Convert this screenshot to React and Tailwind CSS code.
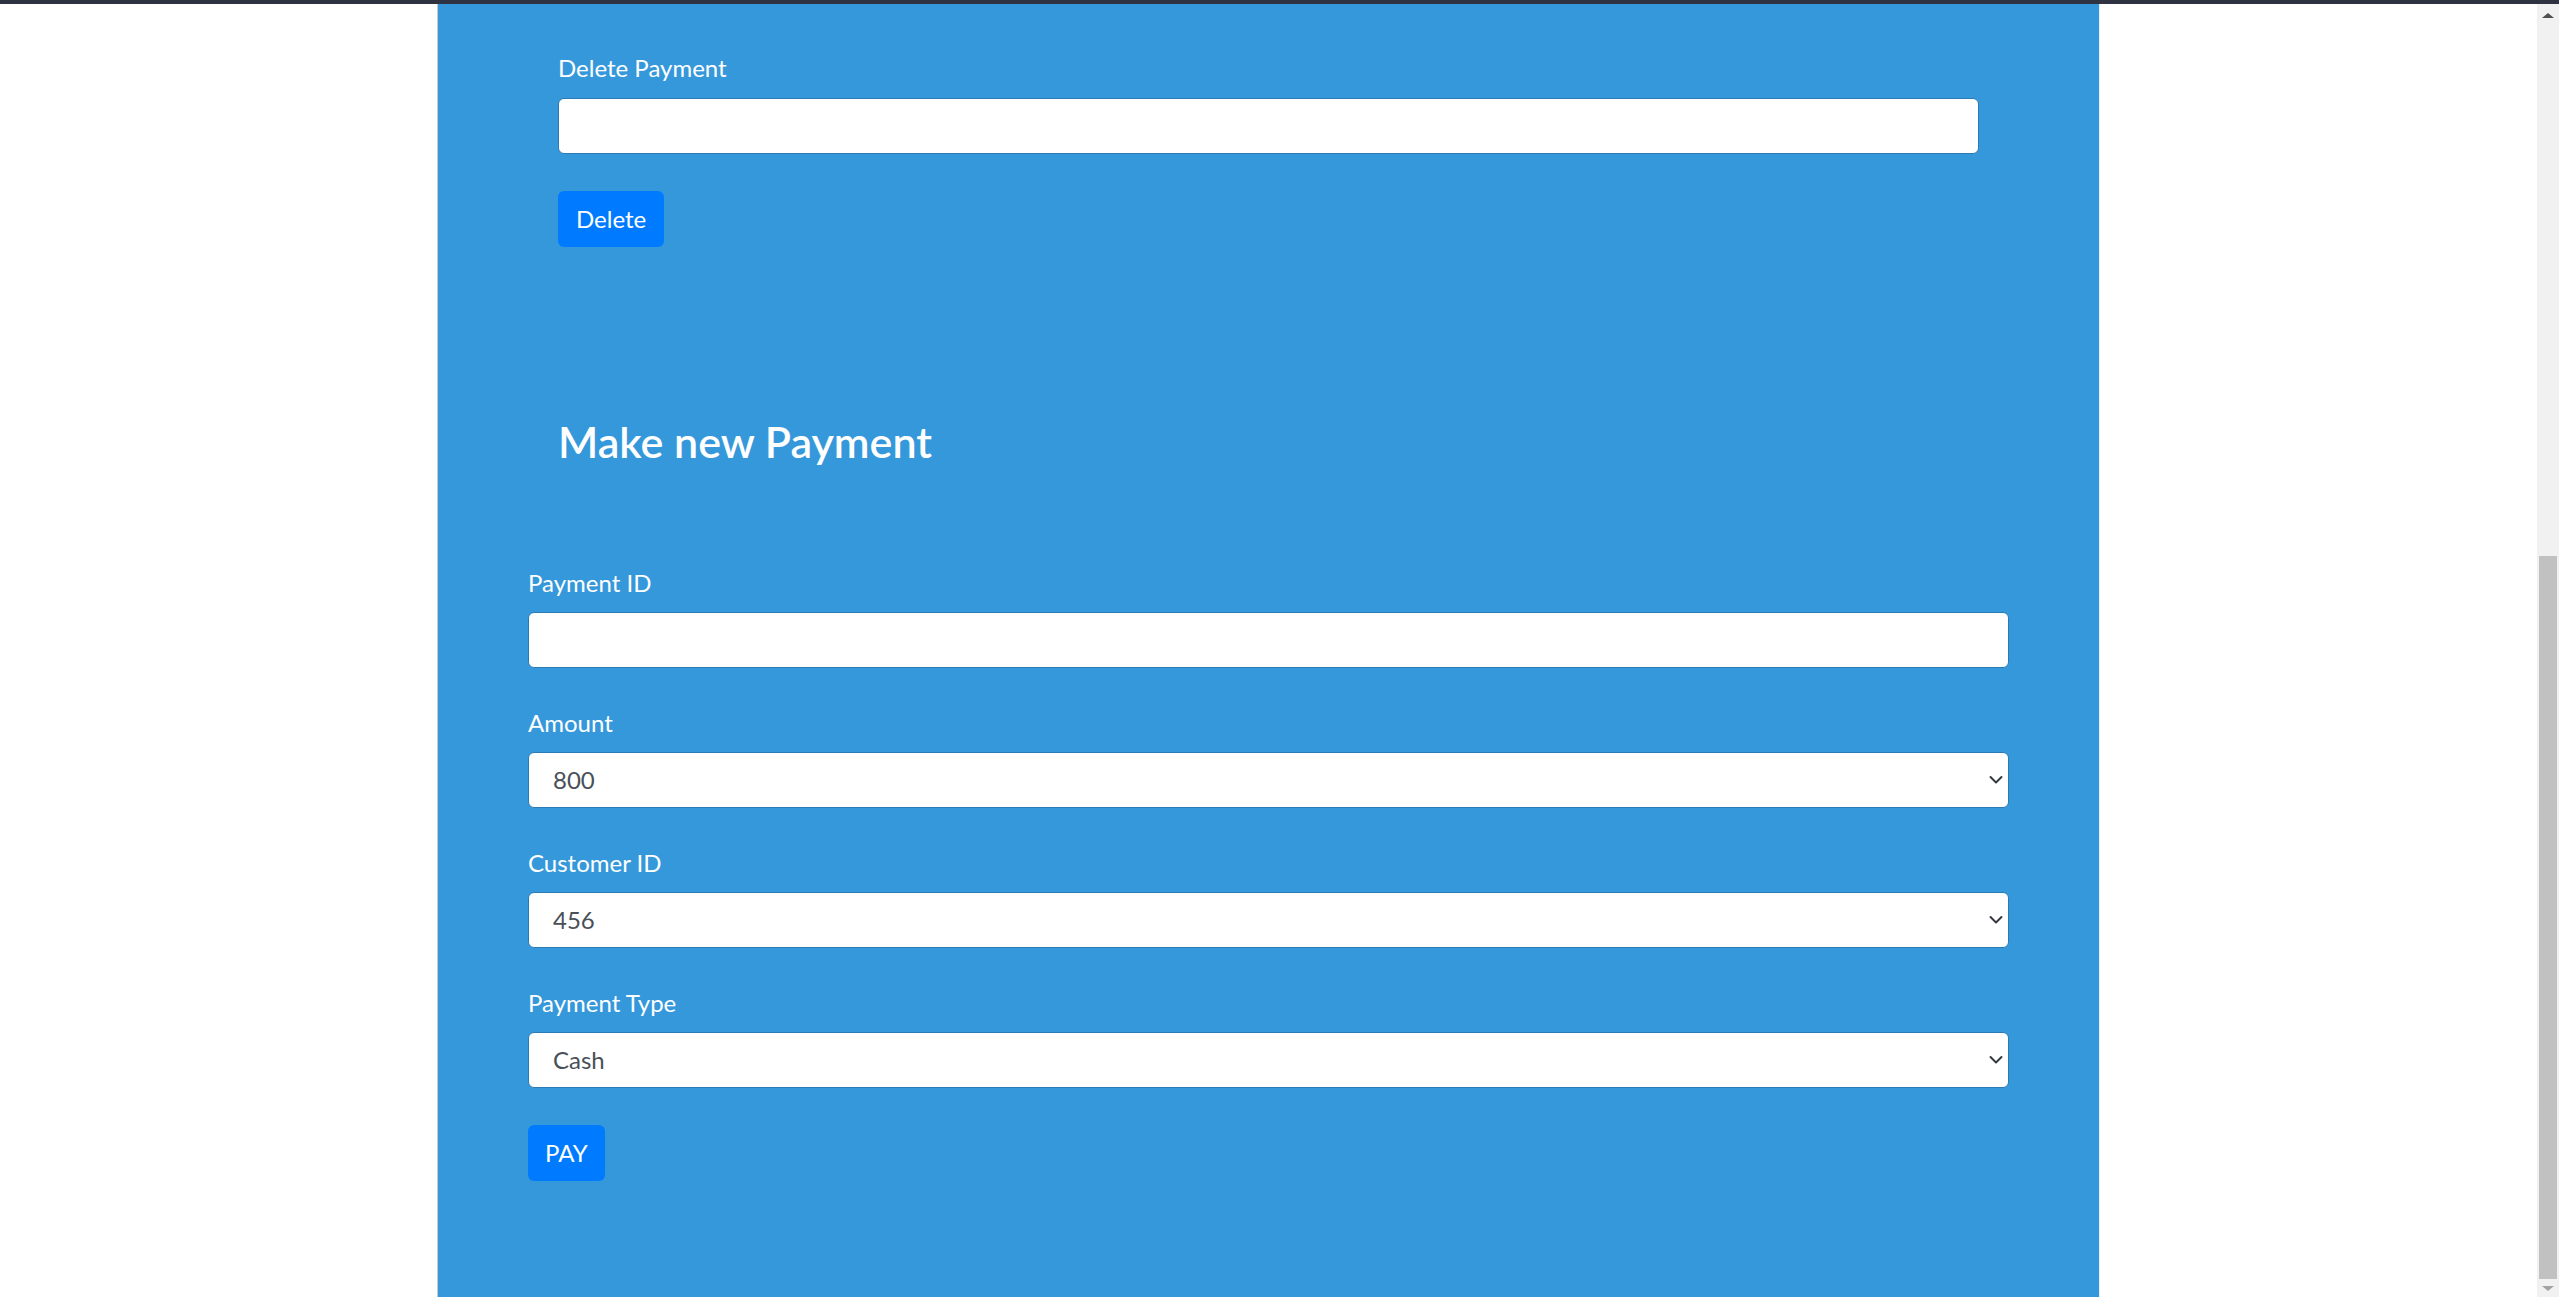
import { useState } from 'react'

const font = { fontFamily: 'Lato, "Open Sans", sans-serif' }

function Chevron() {
  return (
    <svg width="14" height="9" viewBox="0 0 14 9" className="pointer-events-none absolute right-[6px] top-1/2 -translate-y-1/2">
      <path d="M1.5 1.5 L7 7 L12.5 1.5" fill="none" stroke="#343a40" strokeWidth="2" strokeLinecap="round" strokeLinejoin="round" />
    </svg>
  )
}

function Field({ label, children }) {
  return (
    <div className="mb-[37px]">
      <label className="block h-[36px] text-[24px] leading-[36px] text-white">{label}</label>
      <div className="mt-[11px]">{children}</div>
    </div>
  )
}

function TextInput({ value, onChange }) {
  return (
    <input
      value={value}
      onChange={(e) => onChange(e.target.value)}
      className="block h-[56px] w-full rounded-[6px] border border-[#2a7ab5] bg-white px-[24px] text-[24px] text-[#495057] outline-none"
    />
  )
}

function Select({ value, options, onChange }) {
  return (
    <div className="relative">
      <select
        value={value}
        onChange={(e) => onChange(e.target.value)}
        className="block h-[56px] w-full appearance-none rounded-[6px] border border-[#2a7ab5] bg-white pl-[24px] text-[24px] text-[#495057] outline-none"
        style={font}
      >
        {options.map((o) => (
          <option key={o}>{o}</option>
        ))}
      </select>
      <Chevron />
    </div>
  )
}

function Scrollbar() {
  return (
    <div className="flex w-[22px] shrink-0 flex-col bg-[#f1f1f1]">
      <div className="flex h-[22px] items-center justify-center">
        <div className="h-0 w-0 border-x-[6px] border-b-[5px] border-x-transparent border-b-[#505050]" />
      </div>
      <div className="flex flex-1 flex-col">
        <div className="h-[530px]" />
        <div className="mx-[2px] flex-1 bg-[#c1c1c1]" />
      </div>
      <div className="flex h-[18px] items-center justify-center">
        <div className="h-0 w-0 border-x-[6px] border-t-[5px] border-x-transparent border-t-[#a3a3a3]" />
      </div>
    </div>
  )
}

export default function App() {
  const [deleteId, setDeleteId] = useState('')
  const [paymentId, setPaymentId] = useState('')
  const [amount, setAmount] = useState('800')
  const [customer, setCustomer] = useState('456')
  const [type, setType] = useState('Cash')

  return (
    <div className="flex h-screen flex-col overflow-hidden bg-white" style={font}>
      <div className="h-[4px] shrink-0 bg-[#2e3241]" />
      <div className="flex min-h-0 flex-1">
        <div className="flex flex-1 justify-center">
          <div className="w-[1663px] border-l border-r border-l-[#c8c8c8] border-r-[#e3f1fb] bg-[#3598db] px-[90px]">
            <div className="px-[30px] pt-[46px]">
              <label className="block h-[36px] text-[24px] leading-[36px] text-white">Delete Payment</label>
              <div className="mt-[12px]">
                <TextInput value={deleteId} onChange={setDeleteId} />
              </div>
              <button className="mt-[37px] h-[56px] rounded-[6px] bg-[#007bff] px-[18px] text-[24px] text-white">
                Delete
              </button>
            </div>

            <h3 className="mt-[168px] px-[30px] text-[43px] font-semibold leading-[53px] text-white">Make new Payment</h3>

            <div className="mt-[97px]">
              <Field label="Payment ID">
                <TextInput value={paymentId} onChange={setPaymentId} />
              </Field>
              <Field label="Amount">
                <Select value={amount} options={['800', '1000', '1500']} onChange={setAmount} />
              </Field>
              <Field label="Customer ID">
                <Select value={customer} options={['456', '123', '789']} onChange={setCustomer} />
              </Field>
              <Field label="Payment Type">
                <Select value={type} options={['Cash', 'Card']} onChange={setType} />
              </Field>
              <button className="h-[56px] rounded-[6px] bg-[#007bff] px-[17px] text-[24px] text-white">PAY</button>
            </div>
          </div>
        </div>
        <Scrollbar />
      </div>
    </div>
  )
}
